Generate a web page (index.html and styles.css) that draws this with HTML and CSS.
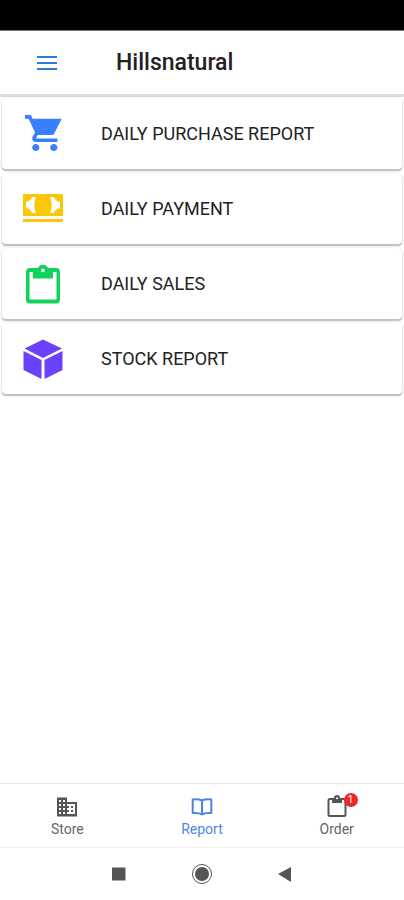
FILE: index.html
```html
<!DOCTYPE html>
<html lang="en">
<head>
<meta charset="utf-8">
<meta name="viewport" content="width=device-width, initial-scale=1">
<title>Hillsnatural</title>
<link rel="stylesheet" href="styles.css">
</head>
<body>
<div class="status-bar"></div>
<header class="app-bar">
  <button class="menu-button" type="button" aria-label="Menu">
    <svg viewBox="0 0 20 14" width="20" height="14"><path d="M0 0h20v2H0zM0 6h20v2H0zM0 12h20v2H0z"/></svg>
  </button>
  <h1 class="title">Hillsnatural</h1>
</header>
<main class="reports">
  <a class="card" href="#purchase">
    <svg class="card-icon cart" viewBox="-0.1 1.4 22.2 22.2"><path d="M7 18c-1.1 0-2 .9-2 2s.9 2 2 2 2-.9 2-2-.9-2-2-2zM1 2v2h2l3.6 7.6-1.35 2.45c-.16.28-.25.6-.25.95 0 1.1.9 2 2 2h12v-2H7.42c-.14 0-.25-.11-.25-.25l.03-.12.9-1.63h8.200l.7-.3L21.400 4H5.210l-.94-2H1zm16 16c-1.100 0-2 .9-2 2s.9 2 2 2 2-.9 2-2-.9-2-2-2z"/></svg>
    <span>DAILY PURCHASE REPORT</span>
  </a>
  <a class="card" href="#payment">
    <svg class="card-icon cash" viewBox="0 0 40 40"><path fill-rule="evenodd" d="M0 5h40v22H0zM13 8H9Q8 12 3 13v6q5 1 6 5h4Q9.500 16 13 8zM27 8h4q1 4 6 5v6q-5 1-6 5h-4q3.500-8 0-16zM0 30h40v3H0z"/></svg>
    <span>DAILY PAYMENT</span>
  </a>
  <a class="card" href="#sales">
    <svg class="card-icon clipboard" viewBox="0 0 40 40"><path fill-rule="evenodd" d="M7 4h8a5.500 5.500 0 0 1 10 0H33q4 0 4 4v27.500q0 4-4 4H7q-4 0-4-4V8q0-4 4-4zM6.500 8v27.500H33.500V8H30v6.500H10V8zM20 4.500a1.900 1.900 0 1 0 0 3.800A1.900 1.900 0 0 0 20 4.500z"/></svg>
    <span>DAILY SALES</span>
  </a>
  <a class="card" href="#stock">
    <svg class="card-icon cube" viewBox="0 0 40 40"><path d="M20 .5 39 9.600 20 19 1.500 9.600zM.5 12 18.500 21v19L.5 31zM39.500 12 21.500 21v19l18-9z"/></svg>
    <span>STOCK REPORT</span>
  </a>
</main>
<nav class="tabs">
  <a class="tab" href="#store">
    <span class="tab-icon">
      <svg viewBox="0 0 24 24" width="24" height="24"><path d="M12 7V2.500H2v19h20V7H12zM6 19H4v-2h2v2zm0-4H4v-2h2v2zm0-4H4V9h2v2zm0-4H4V5h2v2zm4 12H8v-2h2v2zm0-4H8v-2h2v2zm0-4H8V9h2v2zm0-4H8V5h2v2zm10 12h-8v-2h2v-2h-2v-2h2v-2h-2V9h8v10zm-2-8h-2v2h2v-2zm0 4h-2v2h2v-2z"/></svg>
    </span>
    <span>Store</span>
  </a>
  <a class="tab active" href="#report" aria-current="page">
    <span class="tab-icon">
      <svg viewBox="0 0 24 24" width="24" height="24"><path class="line" d="M12 5.500C9.500 4.200 6 4 2.700 4.400V18c3.300-.3 6.800-.1 9.300 1.500 2.500-1.600 6-1.800 9.300-1.500V4.400C18 4 14.500 4.200 12 5.500zv14"/></svg>
    </span>
    <span>Report</span>
  </a>
  <a class="tab" href="#order">
    <span class="tab-icon">
      <svg viewBox="0 0 24 24" width="24" height="24"><path fill-rule="evenodd" d="M5 3h4a3 3 0 0 1 6 0H19q2.500 0 2.500 2.500v14Q21.500 22 19 22H5q-2.500 0-2.500-2.500v-14Q2.500 3 5 3zM4.500 5v15h15V5H17v3H7V5zM12 2.300a1 1 0 1 0 0 2 1 1 0 0 0 0-2z"/></svg>
      <span class="badge">1</span>
    </span>
    <span>Order</span>
  </a>
</nav>
<div class="system-nav">
  <button type="button" aria-label="Recent apps"><svg viewBox="0 0 22 22" width="22" height="22"><path d="M4 4.500h13.500v13H4z"/></svg></button>
  <button type="button" aria-label="Home"><svg viewBox="0 0 22 22" width="22" height="22"><circle cx="11" cy="11" r="9.500" class="ring"/><circle cx="11" cy="11" r="7"/></svg></button>
  <button type="button" aria-label="Back"><svg viewBox="0 0 22 22" width="22" height="22"><path d="M4 11 17 4v15z"/></svg></button>
</div>
</body>
</html>
```
FILE: styles.css
```css
* { box-sizing: border-box; }

body {
  margin: 0;
  min-height: 100vh;
  display: flex;
  flex-direction: column;
  background: #fff;
  color: #222;
  font-family: Roboto, "Liberation Sans", sans-serif;
}

a { color: inherit; text-decoration: none; }

button {
  padding: 0;
  border: 0;
  background: none;
  display: flex;
}

.status-bar {
  height: 31px;
  background: #000;
  border-bottom: 1px solid #777;
}

.app-bar {
  height: 66px;
  display: flex;
  align-items: center;
  gap: 59px;
  padding-left: 37px;
  border-bottom: 3px solid #dcdcdc;
}

.menu-button { fill: #2f7bd3; }

.title {
  margin: 0;
  font-size: 23px;
  font-weight: 500;
}

.reports {
  flex: 1;
  display: flex;
  flex-direction: column;
  gap: 4px;
  padding: 1px 2px;
}

.card {
  height: 71px;
  display: flex;
  align-items: center;
  gap: 38px;
  padding-left: 21px;
  border-radius: 4px;
  background: #fff;
  box-shadow: 0 2px 1px #c0c0c0, 0 1px 3px #ccc;
  font-size: 18px;
}

.card-icon { width: 40px; height: 40px; }
.cart { fill: #3880ff; }
.cash { fill: #fac807; }
.clipboard { fill: #10d35b; }
.cube { fill: #6c41fb; }

.tabs {
  height: 65px;
  display: grid;
  grid-template-columns: repeat(3, 1fr);
  border-top: 1px solid #e8e8e8;
  border-bottom: 1px solid #f2f2f2;
}

.tab {
  display: flex;
  flex-direction: column;
  align-items: center;
  justify-content: center;
  gap: 2px;
  color: #666;
  fill: #555;
  font-size: 14px;
  line-height: 16px;
}

.tab-icon { position: relative; display: flex; }
.active { color: #4a86e0; }

.line {
  fill: none;
  stroke: #4a86e0;
  stroke-width: 2px;
  stroke-linejoin: round;
}

.badge {
  position: absolute;
  top: -2px;
  right: -9px;
  width: 14px;
  height: 14px;
  border-radius: 50%;
  background: #ea2a2a;
  color: #fff;
  font-size: 10px;
  line-height: 14px;
  text-align: center;
}

.system-nav {
  height: 52px;
  display: flex;
  align-items: center;
  justify-content: center;
  gap: 61px;
  fill: #555;
}

.ring { fill: none; stroke: #555; stroke-width: 1px; }
```
